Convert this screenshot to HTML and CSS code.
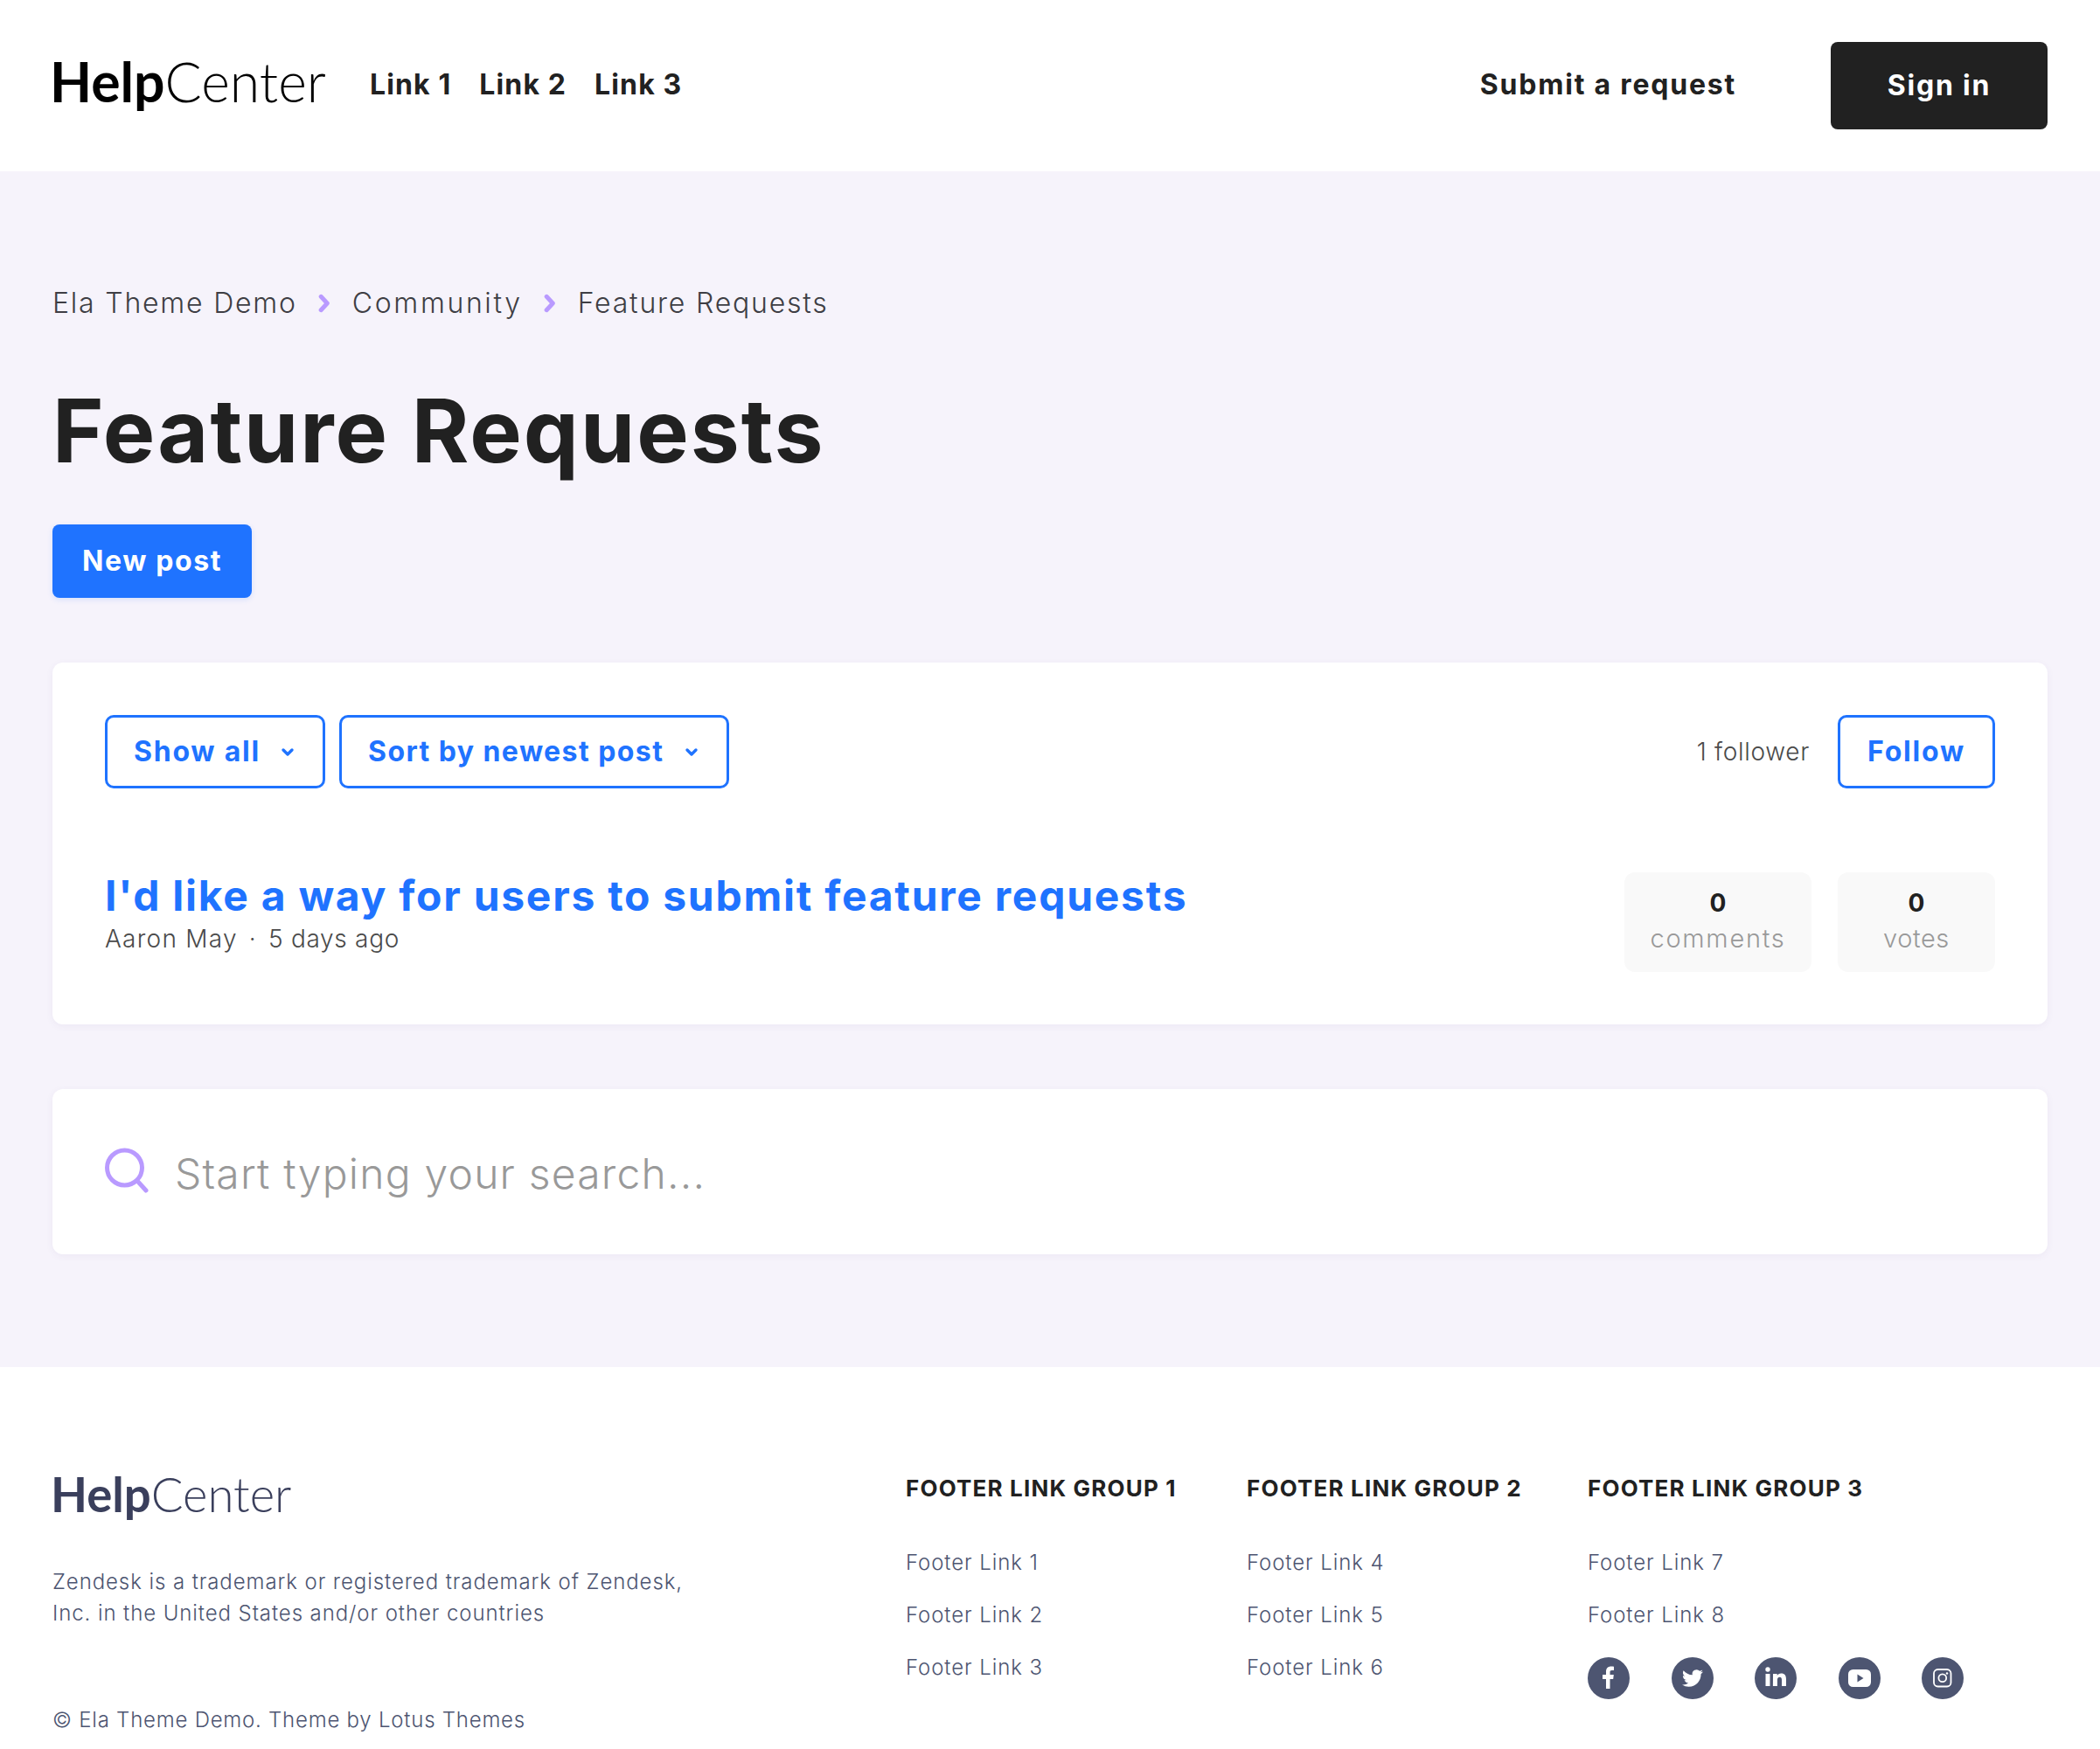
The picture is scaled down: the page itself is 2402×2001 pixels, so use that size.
FILE: index.html
```html
<!DOCTYPE html>
<html lang="en">
<head>
<meta charset="utf-8">
<title>Feature Requests</title>
<link rel="stylesheet" href="styles.css">
</head>
<body>
<header class="site-header">
  <a class="logo"><b>Help</b>Center</a>
  <nav class="top-links"><a>Link 1</a><a>Link 2</a><a>Link 3</a></nav>
  <a class="submit">Submit a request</a>
  <a class="signin">Sign in</a>
</header>
<main class="main">
  <nav class="crumbs">
    <a>Ela Theme Demo</a>
    <svg class="crumb-sep" viewBox="0 0 14 20"><path d="M3.500 3l6.500 7-6.500 7" fill="none" stroke="#b99aff" stroke-width="4.500" stroke-linecap="round" stroke-linejoin="round"/></svg>
    <a class="crumb-wide">Community</a>
    <svg class="crumb-sep" viewBox="0 0 14 20"><path d="M3.500 3l6.500 7-6.500 7" fill="none" stroke="#b99aff" stroke-width="4.500" stroke-linecap="round" stroke-linejoin="round"/></svg>
    <a>Feature Requests</a>
  </nav>
  <h1 class="title">Feature Requests</h1>
  <a class="new-post">New post</a>
  <section class="card posts">
    <div class="toolbar">
      <a class="btn dd dd-show">Show all<svg class="caret" viewBox="0 0 16 12"><path d="M3 3l5 5 5-5" fill="none" stroke="#1f73ff" stroke-width="3.400" stroke-linecap="round" stroke-linejoin="round"/></svg></a>
      <a class="btn dd dd-sort">Sort by newest post<svg class="caret" viewBox="0 0 16 12"><path d="M3 3l5 5 5-5" fill="none" stroke="#1f73ff" stroke-width="3.400" stroke-linecap="round" stroke-linejoin="round"/></svg></a>
      <span class="followers">1 follower</span>
      <a class="btn follow">Follow</a>
    </div>
    <article class="post">
      <div class="post-main">
        <a class="post-title">I'd like a way for users to submit feature requests</a>
        <div class="post-meta"><span>Aaron May</span><span class="dot">·</span><span class="post-time">5 days ago</span></div>
      </div>
      <div class="stat stat-comments"><strong>0</strong><span>comments</span></div>
      <div class="stat stat-votes"><strong>0</strong><span>votes</span></div>
    </article>
  </section>
  <section class="card search">
    <svg class="search-icon" viewBox="0 0 50 53"><circle cx="22.500" cy="23" r="20" fill="none" stroke="#b99aff" stroke-width="5"/><path d="M37 38l10 11" fill="none" stroke="#b99aff" stroke-width="5" stroke-linecap="round"/></svg>
    <span class="placeholder">Start typing your search...</span>
  </section>
</main>
<footer class="site-footer">
  <div class="foot-left">
    <a class="foot-logo"><b>Help</b>Center</a>
    <p class="foot-desc">Zendesk is a trademark or registered trademark of Zendesk,<br>Inc. in the United States and/or other countries</p>
    <p class="copyright">© Ela Theme Demo. Theme by Lotus Themes</p>
  </div>
  <div class="foot-col">
    <h4>FOOTER LINK GROUP 1</h4>
    <a>Footer Link 1</a><a>Footer Link 2</a><a>Footer Link 3</a>
  </div>
  <div class="foot-col">
    <h4>FOOTER LINK GROUP 2</h4>
    <a>Footer Link 4</a><a>Footer Link 5</a><a>Footer Link 6</a>
  </div>
  <div class="foot-col foot-col-last">
    <h4>FOOTER LINK GROUP 3</h4>
    <a>Footer Link 7</a><a>Footer Link 8</a>
    <div class="socials">
      <span class="soc"><svg viewBox="0 0 48 48"><path fill="#fff" d="M21 36V25h-4v-5h4v-3.500c0-4 2.400-6 5.800-6 1.100 0 2.200.1 3.200.2v4.300h-2.200c-1.900 0-2.300.9-2.300 2.200V20h4.300l-.6 5h-3.700v11z"/></svg></span>
      <span class="soc"><svg viewBox="0 0 48 48"><g transform="translate(12 12)"><path fill="#fff" d="M23.953 4.570a10 10 0 01-2.825.775 4.958 4.958 0 002.163-2.723c-.951.555-2.005.959-3.127 1.184a4.920 4.920 0 00-8.384 4.482C7.690 8.095 4.067 6.130 1.640 3.162a4.822 4.822 0 00-.666 2.475c0 1.710.870 3.213 2.188 4.096a4.904 4.904 0 01-2.228-.616v.060a4.923 4.923 0 003.946 4.827 4.996 4.996 0 01-2.212.085 4.936 4.936 0 004.604 3.417 9.867 9.867 0 01-6.102 2.105c-.390 0-.779-.023-1.170-.067a13.995 13.995 0 007.557 2.209c9.053 0 13.998-7.496 13.998-13.985 0-.210 0-.420-.015-.630A9.935 9.935 0 0024 4.590z"/></g></svg></span>
      <span class="soc"><svg viewBox="0 0 48 48"><circle cx="15" cy="14" r="2.700" fill="#fff"/><rect x="12.500" y="19" width="5" height="14" fill="#fff"/><path fill="#fff" d="M21 19h4.700v2c.8-1.400 2.500-2.400 4.500-2.400 4.300 0 5.800 2.600 5.800 6.800V33h-5v-7c0-2-.5-3.300-2.300-3.300-2 0-2.800 1.500-2.800 3.300v7h-5z"/></svg></span>
      <span class="soc"><svg viewBox="0 0 48 48"><rect x="11" y="14" width="26" height="20" rx="5.500" fill="#fff"/><path d="M21.500 19.500v9l7-4.500z" fill="#4d5571"/></svg></span>
      <span class="soc"><svg viewBox="0 0 48 48"><rect x="14" y="14" width="19.500" height="19.500" rx="4.500" fill="none" stroke="#fff" stroke-width="1.800"/><circle cx="23.800" cy="23.800" r="4.400" fill="none" stroke="#fff" stroke-width="1.800"/><circle cx="29" cy="18.500" r="1.200" fill="#fff"/></svg></span>
    </div>
  </div>
</footer>
</body>
</html>
```
FILE: styles.css
```css
* { box-sizing: border-box; }
html, body { margin: 0; padding: 0; }
body {
  font-family: Inter, "Open Sans", sans-serif;
  color: #212121;
  background: #fff;
}
a { color: inherit; text-decoration: none; }

.site-header {
  height: 196px;
  display: flex;
  align-items: center;
  padding: 0 60px 0 57px;
  background: #fff;
}
.logo {
  flex: none;
  width: 314px;
  margin-top: -10px;
  font-family: Lato, sans-serif;
  font-size: 62.500px;
  line-height: 80px;
  font-weight: 300;
  color: #000;
}
.logo b { font-weight: 700; }
.top-links {
  display: flex;
  gap: 32px;
  margin-left: 52px;
  font-size: 32px;
  font-weight: 700;
  line-height: 40px;
  letter-spacing: .035em;
  margin-top: -2px;
}
.submit {
  margin-left: auto;
  font-size: 32px;
  font-weight: 700;
  line-height: 40px;
  letter-spacing: .056em;
  margin-top: -2px;
}
.signin {
  margin-left: 108px;
  width: 248px;
  height: 100px;
  padding-bottom: 2px;
  display: flex;
  align-items: center;
  justify-content: center;
  background: #212121;
  color: #fff;
  border-radius: 8px;
  font-size: 32px;
  font-weight: 700;
  letter-spacing: .055em;
}

.main {
  background: #f6f3fb;
  padding: 131px 60px 129px;
}
.crumbs {
  display: flex;
  align-items: center;
  font-size: 32px;
  font-weight: 300;
  line-height: 40px;
  letter-spacing: .056em;
  color: #3e3e44;
}
.crumb-wide { letter-spacing: .082em; }
.crumb-sep { width: 16px; height: 22px; margin: 0 24px 0 23px; }
.title {
  margin: 70px 0 0;
  font-size: 100px;
  line-height: 112px;
  font-weight: 700;
  letter-spacing: .02em;
  color: #212121;
}
.new-post {
  margin-top: 51px;
  width: 228px;
  height: 84px;
  padding-bottom: 2px;
  display: flex;
  align-items: center;
  justify-content: center;
  background: #1f73ff;
  color: #fff;
  border-radius: 8px;
  font-size: 32px;
  font-weight: 700;
  letter-spacing: .05em;
  box-shadow: 0 2px 6px rgba(31, 115, 255, .15);
}
.card {
  background: #fff;
  border-radius: 12px;
  box-shadow: 0 2px 8px rgba(80, 70, 130, .06);
}
.posts { margin-top: 74px; padding: 60px; }
.toolbar { display: flex; align-items: center; }
.btn {
  height: 84px;
  padding-bottom: 2px;
  display: flex;
  align-items: center;
  border: 3px solid #1f73ff;
  border-radius: 10px;
  color: #1f73ff;
  font-size: 32px;
  font-weight: 700;
  letter-spacing: .055em;
  background: #fff;
}
.dd { padding-left: 30px; }
.dd-show { width: 252px; }
.dd-sort { width: 446px; margin-left: 16px; letter-spacing: .045em; }
.caret { width: 16px; height: 12px; margin-left: auto; margin-right: 32px; margin-top: 3px; }
.followers {
  margin-left: auto;
  font-size: 28px;
  font-weight: 300;
  letter-spacing: .025em;
  color: #4a4a4a;
}
.follow { width: 180px; margin-left: 32px; justify-content: center; }
.post { display: flex; align-items: flex-start; margin-top: 96px; }
.post-main { flex: 1; }
.post-title {
  display: block;
  font-size: 48px;
  line-height: 54px;
  font-weight: 700;
  letter-spacing: .036em;
  color: #1f73ff;
}
.post-meta {
  display: flex;
  font-size: 28px;
  line-height: 36px;
  font-weight: 300;
  letter-spacing: .045em;
  color: #4a4a4a;
  margin-top: 4px;
}
.dot { margin: 0 13px; }
.post-time { letter-spacing: .025em; }
.stat {
  height: 114px;
  padding-top: 3px;
  display: flex;
  flex-direction: column;
  align-items: center;
  justify-content: center;
  background: #f9f9f9;
  border-radius: 12px;
}
.stat strong { font-size: 28px; line-height: 36px; font-weight: 700; color: #212121; margin-top: -2px; }
.stat span { font-size: 29px; line-height: 46px; font-weight: 300; color: #999; letter-spacing: .06em; }
.stat-votes span { letter-spacing: .02em; }
.stat-comments { width: 214px; }
.stat-votes { width: 180px; margin-left: 30px; }
.search {
  margin-top: 74px;
  height: 189px;
  padding: 0 60px;
  display: flex;
  align-items: center;
}
.search-icon { width: 50px; height: 53px; margin-top: -3px; }
.placeholder {
  margin-left: 30px;
  font-size: 48px;
  line-height: 60px;
  padding-top: 4px;
  font-weight: 300;
  letter-spacing: .025em;
  color: #999;
}

.site-footer {
  display: flex;
  padding: 121px 60px 14px;
  background: #fff;
  color: #4d5571;
}
.foot-left { width: 976px; }
.foot-logo {
  display: block;
  margin: -10px 0 0 -2px;
  font-family: Lato, sans-serif;
  font-size: 54.500px;
  line-height: 68px;
  font-weight: 300;
  color: #3a3f5c;
}
.foot-logo b { font-weight: 700; }
.foot-desc {
  margin: 49px 0 0;
  font-size: 24px;
  line-height: 36px;
  font-weight: 300;
  letter-spacing: .038em;
}
.copyright {
  margin: 86px 0 0;
  font-size: 24px;
  line-height: 36px;
  font-weight: 300;
  letter-spacing: .032em;
}
.foot-col { width: 390px; display: flex; flex-direction: column; align-items: flex-start; }
.foot-col-last { width: 526px; }
.foot-col h4 {
  margin: 0;
  font-size: 26px;
  line-height: 36px;
  font-weight: 700;
  letter-spacing: .045em;
  color: #212121;
}
.foot-col a {
  font-size: 24px;
  line-height: 30px;
  font-weight: 300;
  letter-spacing: .038em;
  margin-bottom: 30px;
}
.foot-col h4 + a { margin-top: 52px; }
.socials { display: flex; gap: 47.500px; margin-top: 3px; }
.soc { width: 48px; height: 48px; border-radius: 50%; background: #4d5571; display: block; }
.soc svg { display: block; width: 48px; height: 48px; }
```
